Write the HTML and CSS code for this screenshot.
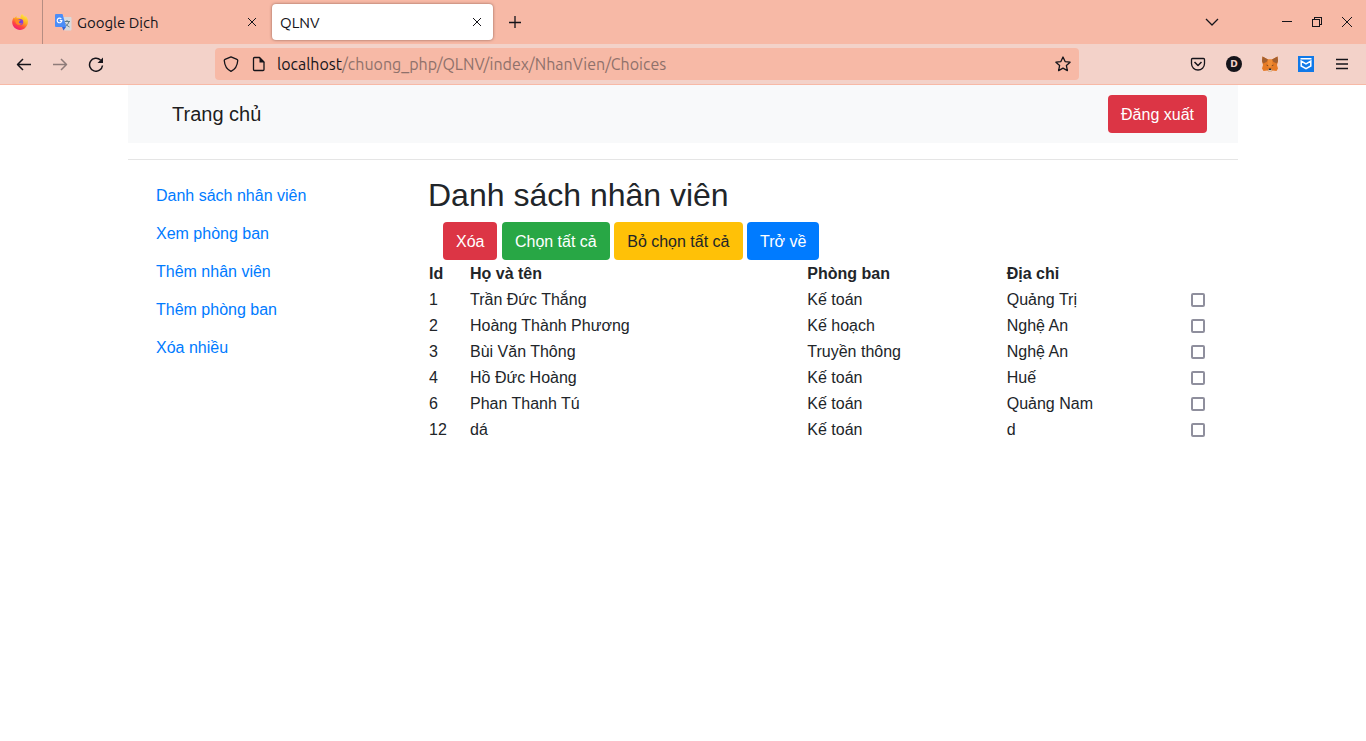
FILE: index.html
```html
<!DOCTYPE html>
<html lang="vi">
<head>
<meta charset="utf-8">
<meta name="viewport" content="width=device-width, initial-scale=1">
<title>QLNV</title>
<link rel="stylesheet" href="styles.css">
</head>
<body>
<header class="browser">
  <div class="tabbar">
    <div class="pinned-tab">
      <svg width="16" height="16" viewBox="0 0 16 16" aria-hidden="true">
        <defs>
          <linearGradient id="flame" x1="0.8" y1="0" x2="0.25" y2="1"><stop offset="0" stop-color="#fff04a"/><stop offset="0.4" stop-color="#ffb01f"/><stop offset="0.7" stop-color="#ff4a3c"/><stop offset="1" stop-color="#f0147d"/></linearGradient>
          <radialGradient id="globe"><stop offset="0" stop-color="#5b4be0"/><stop offset="1" stop-color="#9a3ccf"/></radialGradient>
        </defs>
        <path fill="url(#flame)" d="M10 0c1.200.8 1.800 1.800 2 2.900l1-.8c1.500.8 2.500 2.200 2.800 3.800.9 5.100-2.600 9.900-7.800 10C3.700 15.900.2 12.500.2 8.300c0-2 .7-3.800 1.900-5.100l.3 1.300C3 3.500 3.800 2.500 4.500 2.200l.2 1.700c1.300-.4 2.700-.3 3.900.4C8.300 2.800 8.900 1.100 10 0z"/>
        <circle cx="8.300" cy="8" r="3" fill="url(#globe)"/>
        <path fill="#ff8a25" d="M3.200 5.800c1.500-1 2.800-.6 3.800.1L8.700 6.500C8.400 7.300 7.200 7.300 6.800 8c.3 1.500 1.800 1.900 3.200 1.100-1 2.300-4.700 2.500-6 .1-.7-1.200-.9-2.300-.8-3.400z"/>
      </svg>
    </div>
    <div class="tab">
      <svg width="17" height="17" viewBox="0 0 17 17" aria-hidden="true">
        <path fill="#d9dadd" d="M7 3h8.500c.5 0 1 .5 1 1v11.500c0 .5-.5 1-1 1H9.500z"/>
        <path fill="none" stroke="#607e88" d="M9.500 7.500h5.500M12 6v1.500M14 7.500c-.5 2-2 4-4 5M10.500 9.500c1 1.500 2 2.500 4 3.500"/>
        <path fill="#3367d6" d="M7 13h4l-2.500 3.500z"/>
        <path fill="#4b8df8" d="M1 0h6.500l3.800 13H1a1 1 0 0 1-1-1V1a1 1 0 0 1 1-1z"/>
        <path fill="none" stroke="#fff" stroke-width="1.200" d="M6.300 5A2.300 2.300 0 1 0 6.800 6.700H4.700"/>
      </svg>
      <span class="tab-title">Google Dịch</span>
      <button class="plain" aria-label="Đóng thẻ Google Dịch"><svg width="10" height="10" viewBox="0 0 10 10"><path class="line" d="M1 1l8 8M9 1L1 9"/></svg></button>
    </div>
    <div class="tab tab-active">
      <span class="tab-title">QLNV</span>
      <button class="plain" aria-label="Đóng thẻ QLNV"><svg width="10" height="10" viewBox="0 0 10 10"><path class="line" d="M1 1l8 8M9 1L1 9"/></svg></button>
    </div>
    <button class="plain new-tab" aria-label="Thẻ mới"><svg width="12" height="12" viewBox="0 0 12 12"><path class="line thick" d="M6 0v12M0 6.500h12"/></svg></button>
    <div class="window-controls">
      <button class="plain tab-list" aria-label="Danh sách thẻ"><svg width="14" height="14" viewBox="0 0 14 14"><path class="line thick" d="M1 4l6 6 6-6"/></svg></button>
      <button class="plain" aria-label="Thu nhỏ"><svg width="12" height="12" viewBox="0 0 12 12"><path class="line sharp" d="M1 5.500h10"/></svg></button>
      <button class="plain" aria-label="Khôi phục"><svg width="12" height="12" viewBox="0 0 12 12"><path class="line sharp" d="M1.500 3.500h7v7h-7zM3.500 3.500v-2h7v7h-2"/></svg></button>
      <button class="plain" aria-label="Đóng"><svg width="12" height="12" viewBox="0 0 12 12"><path class="line" d="M1 1l10 10M11 1L1 11"/></svg></button>
    </div>
  </div>
  <div class="toolbar">
    <div class="navigation">
      <button class="plain" aria-label="Quay lại"><svg width="16" height="16" viewBox="0 0 16 16"><path class="line bold" d="M15 8.500H1.500M7 3L1.500 8.500 7 14"/></svg></button>
      <button class="plain" aria-label="Tiếp" disabled><svg width="16" height="16" viewBox="0 0 16 16"><path class="line bold" d="M1 8.500h13.500M9 3l5.500 5.500L9 14"/></svg></button>
      <button class="plain" aria-label="Tải lại"><svg width="16" height="16" viewBox="0 0 16 16"><path class="line bold" d="M12.500 4A6.500 6.500 0 1 0 14.500 9.500"/><path fill="#15141a" d="M15 1.500V7H9.500z"/></svg></button>
    </div>
    <div class="address">
      <svg width="16" height="16" viewBox="0 0 16 16" aria-hidden="true"><path class="line thick" d="M8 .8l6 2.500c.8.300.8.700.7 1.500-.3 4.800-2.200 8.400-6.700 10.600C3.500 13.200 1.600 9.600 1.300 4.800c-.1-.8 0-1.200.7-1.500z"/></svg>
      <svg width="14" height="16" viewBox="0 0 14 16" aria-hidden="true"><path class="line thick" d="M3.500 1.500H8.500L13 6v7.500a1 1 0 0 1-1 1H3.500a1 1 0 0 1-1-1v-11a1 1 0 0 1 1-1z"/><path fill="#15141a" d="M8.500 1l5 5.500h-5z"/></svg>
      <p class="url"><span class="host">localhost</span>/chuong_php/QLNV/index/NhanVien/Choices</p>
      <button class="plain" aria-label="Đánh dấu trang"><svg width="16" height="16" viewBox="0 0 16 16"><path class="line thick" d="M8 1l2.100 4.600 5 .6-3.700 3.400 1 5L8 12.100l-4.400 2.500 1-5L.9 6.200l5-.6z"/></svg></button>
    </div>
    <div class="extensions">
      <button class="plain" aria-label="Pocket"><svg width="16" height="16" viewBox="0 0 16 16"><path class="line thick" d="M2.500 2.500h11c.7 0 1 .3 1 1v4c0 3.800-3 6.500-6.500 6.500S1.500 11.300 1.500 7.500v-4c0-.7.300-1 1-1z"/><path class="line bold" d="M4.500 6L8 9.500 11.500 6"/></svg></button>
      <button class="plain account" aria-label="Tài khoản">D</button>
      <button class="plain" aria-label="MetaMask">
        <svg width="16" height="16" viewBox="0 0 16 16">
          <path fill="#e57a26" d="M.5.500L6 3.500h4L15.500.500 16 5l-1 4 1 3.500-1.500 2.500-4-.5-1 1h-3l-1-1-4 .5L0 12.500 1 9 0 5z"/>
          <path fill="#a35f30" d="M.5.500L6 3.500 4.500 6 1 7.500 0 5zM15.500.500L10 3.500 11.500 6 15 7.500 16 5z"/>
          <path fill="#ef8c35" d="M6 3.500h4l.5 5L9 11H7L5.500 8.500z"/>
          <path fill="#7a4626" d="M4.500 8.500l1.800.7-.3.800-1.200-.3zM11.500 8.500l-1.800.7.300.8 1.200-.3z"/>
          <path fill="#d9cbbf" d="M6 13.200h4l-.5 2.300h-3z"/><path fill="#2b2a2c" d="M7 12.500h2l.4 1.500H6.600z"/>
        </svg>
      </button>
      <button class="plain" aria-label="Tiện ích bảo vệ"><svg width="16" height="16" viewBox="0 0 16 16"><path fill="#1079e8" d="M0 0h16v16H0z"/><path fill="none" stroke="#fff" stroke-width="1.500" d="M2.500 2.800h11M3.200 5v5L8 12.700 12.800 10V5L8 7.900z"/></svg></button>
      <button class="plain" aria-label="Trình đơn"><svg width="16" height="16" viewBox="0 0 16 16"><path class="line thick" d="M2 3.500h12M2 8h12M2 12.500h12"/></svg></button>
    </div>
  </div>
</header>
<div class="page">
  <div class="topbar">
    <a class="brand" href="#">Trang chủ</a>
    <button class="btn btn-danger">Đăng xuất</button>
  </div>
  <hr class="divider">
  <div class="columns">
    <nav class="sidebar">
      <a href="#">Danh sách nhân viên</a>
      <a href="#">Xem phòng ban</a>
      <a href="#">Thêm nhân viên</a>
      <a href="#">Thêm phòng ban</a>
      <a href="#">Xóa nhiều</a>
    </nav>
    <main class="content">
      <h1 class="heading">Danh sách nhân viên</h1>
      <div class="actions">
        <button class="btn btn-danger">Xóa</button>
        <button class="btn btn-success">Chọn tất cả</button>
        <button class="btn btn-warning">Bỏ chọn tất cả</button>
        <button class="btn btn-primary">Trở về</button>
      </div>
      <table class="staff">
        <colgroup><col class="col-id"><col class="col-name"><col class="col-room"><col class="col-city"><col class="col-check"></colgroup>
        <thead><tr><th>Id</th><th>Họ và tên</th><th>Phòng ban</th><th>Địa chỉ</th><th></th></tr></thead>
        <tbody>
          <tr><td>1</td><td>Trần Đức Thắng</td><td>Kế toán</td><td>Quảng Trị</td><td><input type="checkbox" aria-label="Chọn Trần Đức Thắng"></td></tr>
          <tr><td>2</td><td>Hoàng Thành Phương</td><td>Kế hoạch</td><td>Nghệ An</td><td><input type="checkbox" aria-label="Chọn Hoàng Thành Phương"></td></tr>
          <tr><td>3</td><td>Bùi Văn Thông</td><td>Truyền thông</td><td>Nghệ An</td><td><input type="checkbox" aria-label="Chọn Bùi Văn Thông"></td></tr>
          <tr><td>4</td><td>Hồ Đức Hoàng</td><td>Kế toán</td><td>Huế</td><td><input type="checkbox" aria-label="Chọn Hồ Đức Hoàng"></td></tr>
          <tr><td>6</td><td>Phan Thanh Tú</td><td>Kế toán</td><td>Quảng Nam</td><td><input type="checkbox" aria-label="Chọn Phan Thanh Tú"></td></tr>
          <tr><td>12</td><td>dá</td><td>Kế toán</td><td>d</td><td><input type="checkbox" aria-label="Chọn dá"></td></tr>
        </tbody>
      </table>
    </main>
  </div>
</div>
</body>
</html>
```
FILE: styles.css
```css
* { box-sizing: border-box; }

body {
  margin: 0;
  background: #fff;
  color: #212529;
  font: 16px/24px "Liberation Sans", Arial, sans-serif;
}

a { text-decoration: none; }
svg { display: block; flex: none; }

/* Browser window */
.browser {
  color: #15141a;
  font: 15px/20px Ubuntu, "Noto Sans", sans-serif;
}

.plain {
  display: flex;
  align-items: center;
  justify-content: center;
  flex: none;
  padding: 0;
  border: 0;
  background: none;
  color: inherit;
}
.plain:disabled { opacity: 0.45; }

.line { fill: none; stroke: #15141a; stroke-width: 1; stroke-linejoin: round; }
.thick { stroke-width: 1.3; }
.bold { stroke-width: 1.5; }
.sharp { stroke-linejoin: miter; shape-rendering: crispEdges; }

.tabbar {
  display: flex;
  align-items: center;
  height: 44px;
  background: #f7b9a6;
}
.pinned-tab {
  display: flex;
  align-items: center;
  align-self: stretch;
  width: 43px;
  padding-left: 12px;
  border-right: 1px solid #b68d82;
}
.tab {
  display: flex;
  align-items: center;
  gap: 5px;
  width: 221px;
  height: 36px;
  margin-right: 8px;
  padding: 0 7px 0 12px;
}
.tab-active {
  margin-right: 16px;
  padding: 0 11px 0 8px;
  border-radius: 4px;
  background: #fff;
  box-shadow: 0 0 3px rgba(80, 40, 30, 0.6);
}
.tab-title { flex: 1; padding-top: 2px; }
.window-controls {
  display: flex;
  gap: 18px;
  margin-left: auto;
  padding-right: 13px;
}
.tab-list { margin-right: 44px; }

.toolbar {
  display: flex;
  align-items: center;
  height: 41px;
  padding: 0 16px;
  border-bottom: 1px solid #f7b9a6;
  background: #f3d2c9;
}
.navigation, .extensions { display: flex; gap: 20px; }
.navigation { width: 199px; }
.address {
  display: flex;
  align-items: center;
  flex: 1;
  gap: 12px;
  height: 32px;
  padding: 0 8px;
  border-radius: 4px;
  background: #f7b9a6;
}
.url {
  flex: 1;
  margin: 0;
  color: #8f716b;
  font-size: 16px;
}
.host { color: #15141a; }
.extensions { margin-left: 111px; }
.account {
  width: 16px;
  height: 16px;
  border-radius: 50%;
  background: #15141a;
  color: #f3d2c9;
  font: bold 9px/16px "DejaVu Sans", sans-serif;
}

/* Page */
.page {
  max-width: 1140px;
  margin: 0 auto;
  padding: 0 15px;
}
.topbar {
  display: flex;
  align-items: center;
  justify-content: space-between;
  padding: 10px 31px 10px 44px;
  background: #f8f9fa;
}
.brand { color: rgba(0, 0, 0, 0.9); font-size: 20px; }
.divider {
  margin: 16px 0;
  border: 0;
  border-top: 1px solid rgba(0, 0, 0, 0.1);
}
.columns {
  display: grid;
  grid-template-columns: 300px 1fr;
  padding-right: 31px;
}
.sidebar { display: flex; flex-direction: column; padding-left: 28px; }
.sidebar a { padding: 8px 0 6px; color: #007bff; }
.heading {
  margin: 0 0 8px;
  font-size: 32px;
  font-weight: 500;
  line-height: 38px;
}
.actions { padding-left: 15px; }

.btn {
  padding: 7px 12px 5px;
  border: 1px solid transparent;
  border-radius: 4px;
  color: #fff;
  font: inherit;
  vertical-align: middle;
}
.btn-danger { background: #dc3545; }
.btn-success { background: #28a745; }
.btn-warning { background: #ffc107; color: #212529; }
.btn-primary { background: #007bff; }

.staff {
  width: 100%;
  border-collapse: collapse;
  table-layout: fixed;
}
.staff th, .staff td { padding: 2px 1px 0; text-align: left; }
.col-id { width: 41px; }
.col-name { width: 43.3%; }
.col-room { width: 25.6%; }
.col-check { width: 18px; }
.staff input {
  display: block;
  width: 14px;
  height: 14px;
  margin: 0 0 0 1px;
  appearance: none;
  border: 2px solid #8f8f9d;
  border-radius: 2px;
  background: #fff;
}
```
